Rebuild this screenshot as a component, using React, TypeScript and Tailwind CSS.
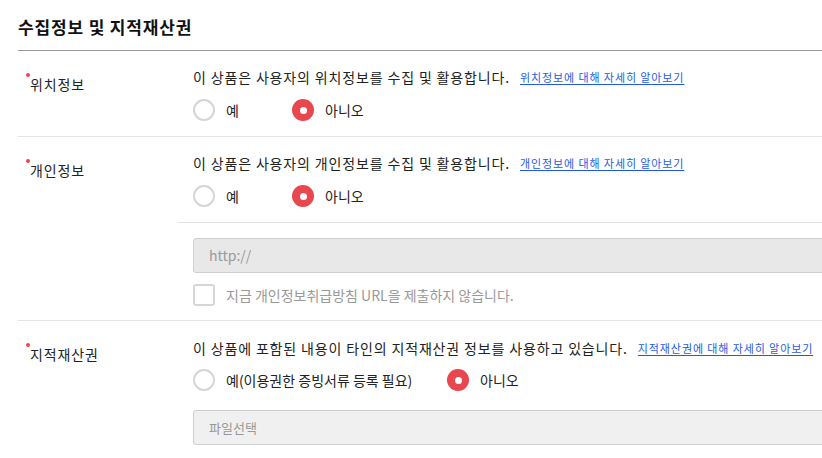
import React from "react";

const font = { fontFamily: '"Noto Sans CJK KR", "Noto Sans", sans-serif' };

function Radio({ checked }: { checked: boolean }) {
  return checked ? (
    <span className="flex h-[22px] w-[22px] shrink-0 items-center justify-center rounded-full bg-[#e9474e]">
      <span className="h-[7px] w-[7px] rounded-full bg-white" />
    </span>
  ) : (
    <span className="h-[22px] w-[22px] shrink-0 rounded-full border-2 border-[#d6d6d6] bg-white" />
  );
}

function Option({ checked, label, width }: { checked: boolean; label: string; width?: string }) {
  return (
    <label className={`flex items-center gap-[11px] ${width ?? ""}`}>
      <Radio checked={checked} />
      <span className="text-[14px] leading-5 text-[#222]">{label}</span>
    </label>
  );
}

function Label({ text }: { text: string }) {
  return (
    <div className="w-[160px] shrink-0 pl-[12px] pt-[20px]">
      <span className="relative text-[14px] leading-5 tracking-[0.9px] text-[#222]">
        <span className="absolute left-[-4px] top-[-1px] h-[4px] w-[4px] rounded-full bg-[#e9474e]" />
        {text}
      </span>
    </div>
  );
}

function Desc({ text, link }: { text: string; link: string }) {
  return (
    <div className="flex h-5 items-center">
      <span className="text-[14px] leading-5 tracking-[0.85px] text-[#222]">{text}</span>
      <a className="ml-[10px] text-[11px] leading-4 tracking-[0.9px] text-[#1f5be0] underline underline-offset-2">{link}</a>
    </div>
  );
}

export default function App() {
  return (
    <div className="h-[458px] w-[822px] overflow-hidden bg-white" style={font}>
      <div className="w-[900px] pl-[18px]">
        <div className="border-b border-[#999] pb-[13px] pt-[16px]">
          <h2 className="text-[17px] font-bold leading-[21px] tracking-[0.85px] text-[#111]">수집정보 및 지적재산권</h2>
        </div>

        <div className="flex border-b border-[#e4e4e4]">
          <Label text="위치정보" />
          <div className="flex-1 pb-[15px] pl-[15px] pt-[16px]">
            <Desc text="이 상품은 사용자의 위치정보를 수집 및 활용합니다." link="위치정보에 대해 자세히 알아보기" />
            <div className="mt-[12px] flex items-center">
              <Option checked={false} label="예" width="w-[99px]" />
              <Option checked={true} label="아니오" />
            </div>
          </div>
        </div>

        <div className="flex border-b border-[#e4e4e4]">
          <Label text="개인정보" />
          <div className="flex-1">
            <div className="border-b border-[#e4e4e4] pb-[15px] pl-[15px] pt-[16px]">
              <Desc text="이 상품은 사용자의 개인정보를 수집 및 활용합니다." link="개인정보에 대해 자세히 알아보기" />
              <div className="mt-[12px] flex items-center">
                <Option checked={false} label="예" width="w-[99px]" />
                <Option checked={true} label="아니오" />
              </div>
            </div>
            <div className="pb-[14px] pl-[15px] pt-[15px]">
              <div className="flex h-[35px] items-center rounded-[3px] border border-[#cfcfcf] bg-[#e8e8e8] pl-[15px] text-[14px] text-[#9a9a9a]">
                http://
              </div>
              <div className="mt-[11px] flex items-center gap-[11px]">
                <span className="h-[22px] w-[22px] shrink-0 rounded-[3px] border-2 border-[#d6d6d6] bg-white" />
                <span className="text-[14px] leading-5 text-[#999]">지금 개인정보취급방침 URL을 제출하지 않습니다.</span>
              </div>
            </div>
          </div>
        </div>

        <div className="flex">
          <Label text="지적재산권" />
          <div className="flex-1 pl-[15px] pt-[17px]">
            <Desc text="이 상품에 포함된 내용이 타인의 지적재산권 정보를 사용하고 있습니다." link="지적재산권에 대해 자세히 알아보기" />
            <div className="mt-[11px] flex items-center">
              <Option checked={false} label="예(이용권한 증빙서류 등록 필요)" width="w-[254px]" />
              <Option checked={true} label="아니오" />
            </div>
            <div className="mt-[19px] flex h-[35px] items-center rounded-[3px] border border-[#cfcfcf] bg-[#f0f0f0] pl-[15px] text-[13px] text-[#999]">
              파일선택
            </div>
          </div>
        </div>
      </div>
    </div>
  );
}
